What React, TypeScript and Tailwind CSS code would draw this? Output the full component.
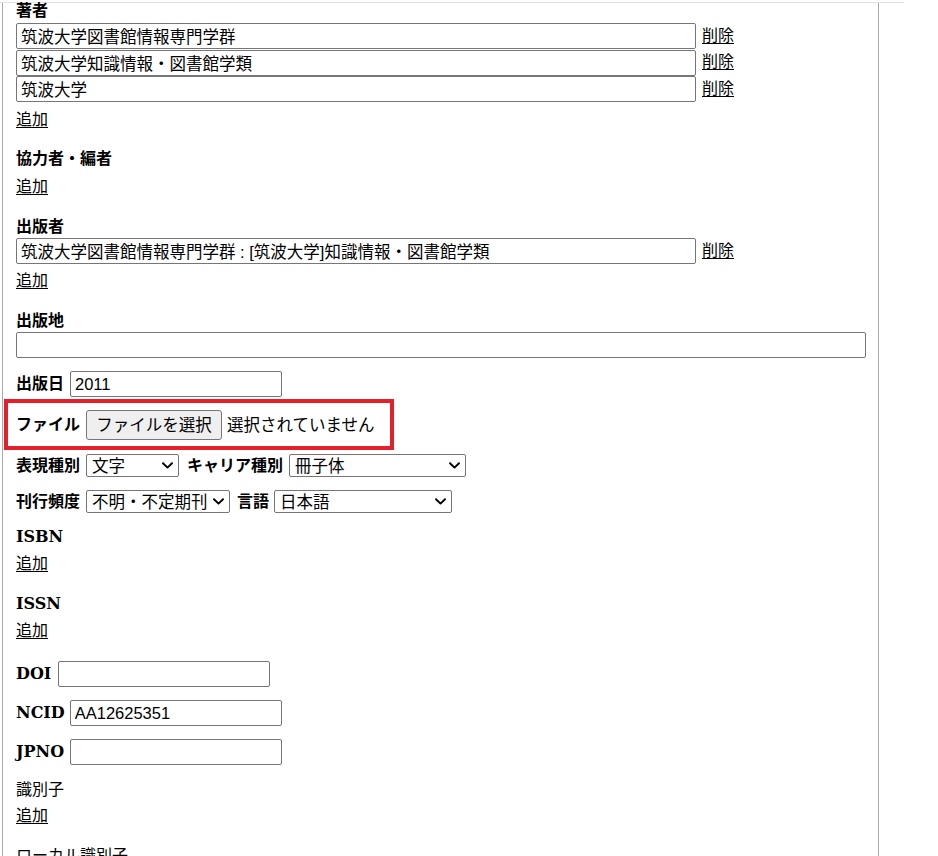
import React from "react";

const LABEL = "font-['DejaVu_Serif','Noto_Sans_CJK_JP',serif] text-[16px] text-black";
const LINK = "font-['Liberation_Sans','Noto_Sans_CJK_JP',sans-serif] text-[16px] text-black";
const SANS = "font-['Liberation_Sans','Noto_Sans_CJK_JP',sans-serif] text-[16.5px] text-black";

function Label({ children, bold = true, inline = false, className = "" }: { children: React.ReactNode; bold?: boolean; inline?: boolean; className?: string }) {
  return (
    <div className={`${LABEL} ${bold ? "font-bold" : "font-normal"} ${inline ? "self-center" : "self-start"} shrink-0 h-[20px] leading-[20px] whitespace-nowrap ${className}`}>
      {children}
    </div>
  );
}

function Link({ children, inline = false, className = "" }: { children: React.ReactNode; inline?: boolean; className?: string }) {
  return (
    <a href="#" onClick={(e) => e.preventDefault()} className={`${LINK} ${inline ? "self-center" : "self-start"} shrink-0 underline underline-offset-[2px] h-[20px] leading-[20px] whitespace-nowrap ${className}`}>
      {children}
    </a>
  );
}

function TextInput({ value = "", width }: { value?: string; width: string }) {
  return (
    <input
      readOnly
      value={value}
      className={`${SANS} ${width} shrink-0 h-[26px] border border-[#767676] rounded-[2px] bg-white pl-[4px] pr-[2px] outline-none`}
    />
  );
}

function Chevron() {
  return (
    <svg width="11" height="7" viewBox="0 0 11 7" fill="none">
      <path d="M1 1.2 L5.5 5.6 L10 1.2" stroke="#000" strokeWidth="1.9" strokeLinecap="round" strokeLinejoin="round" />
    </svg>
  );
}

function Select({ value, width }: { value: string; width: string }) {
  return (
    <div className={`${SANS} ${width} h-[23px] border border-[#767676] rounded-[2px] bg-white flex items-center justify-between pl-[5px] pr-[5px] whitespace-nowrap`}>
      <span className="leading-[20px]">{value}</span>
      <Chevron />
    </div>
  );
}

function InputRow({ value, h }: { value: string; h: string }) {
  return (
    <div className={`flex items-start gap-[6px] shrink-0 ${h}`}>
      <TextInput value={value} width="w-[680px]" />
      <div className="h-[26px] flex items-center">
        <Link inline className="mt-[-1px]">削除</Link>
      </div>
    </div>
  );
}

export default function App() {
  return (
    <div className="w-[938px] h-[856px] overflow-hidden bg-white">
      <div className="h-[2px]" />
      <div className="w-[904px] h-[1px] bg-[#e2e2e2]" />
      <div className="ml-[2px] w-[877px] min-h-[853px] border-l border-r border-[#a9a9a9] pl-[13px] flex flex-col">
        <Label className="mt-[-2px]">著者</Label>
        <div className="mt-[2px] flex flex-col shrink-0">
          <InputRow value="筑波大学図書館情報専門学群" h="h-[26.5px]" />
          <InputRow value="筑波大学知識情報・図書館学類" h="h-[26.5px]" />
          <InputRow value="筑波大学" h="h-[26.5px]" />
        </div>
        <Link className="mt-[7.5px]">追加</Link>

        <Label className="mt-[19px]">協力者・編者</Label>
        <Link className="mt-[8px]">追加</Link>

        <Label className="mt-[20px]">出版者</Label>
        <div className="mt-[1px] shrink-0">
          <InputRow value="筑波大学図書館情報専門学群 : [筑波大学]知識情報・図書館学類" h="h-[26px]" />
        </div>
        <Link className="mt-[7px]">追加</Link>

        <Label className="mt-[20px]">出版地</Label>
        <div className="mt-[1px] h-[26px] shrink-0">
          <TextInput width="w-[850px]" />
        </div>

        <div className="mt-[13px] h-[26px] shrink-0 flex items-center gap-[6px]">
          <Label inline>出版日</Label>
          <TextInput value="2011" width="w-[212px]" />
        </div>

        <div className="mt-[2px] ml-[-12px] shrink-0 w-[390px] h-[51px] border-[4px] border-[#e4212b] pl-[8px] flex items-center">
          <Label inline>ファイル</Label>
          <button className={`${SANS} ml-[6px] w-[136px] h-[30px] border border-[#767676] rounded-[3px] bg-[#efefef] leading-[20px]`}>
            ファイルを選択
          </button>
          <span className={`${SANS} ml-[5px] text-[#222] leading-[20px]`}>選択されていません</span>
        </div>

        <div className="mt-[4px] h-[23px] shrink-0 flex items-center">
          <Label inline>表現種別</Label>
          <div className="ml-[6px]"><Select value="文字" width="w-[93px]" /></div>
          <Label inline className="ml-[8px]">キャリア種別</Label>
          <div className="ml-[6px]"><Select value="冊子体" width="w-[177px]" /></div>
        </div>

        <div className="mt-[13px] h-[23px] shrink-0 flex items-center">
          <Label inline>刊行頻度</Label>
          <div className="ml-[6px]"><Select value="不明・不定期刊" width="w-[144px]" /></div>
          <Label inline className="ml-[7px]">言語</Label>
          <div className="ml-[5px]"><Select value="日本語" width="w-[178px]" /></div>
        </div>

        <Label className="mt-[14px]">ISBN</Label>
        <Link className="mt-[7px]">追加</Link>

        <Label className="mt-[20px]">ISSN</Label>
        <Link className="mt-[7px]">追加</Link>

        <div className="mt-[20px] h-[26px] shrink-0 flex items-center gap-[7px]">
          <Label inline>DOI</Label>
          <TextInput width="w-[212px]" />
        </div>
        <div className="mt-[13px] h-[26px] shrink-0 flex items-center gap-[5px]">
          <Label inline>NCID</Label>
          <TextInput value="AA12625351" width="w-[212px]" />
        </div>
        <div className="mt-[13px] h-[26px] shrink-0 flex items-center gap-[6px]">
          <Label inline>JPNO</Label>
          <TextInput width="w-[212px]" />
        </div>

        <Label bold={false} className="mt-[15px]">識別子</Label>
        <Link className="mt-[6px]">追加</Link>

        <Label bold={false} className="mt-[20px]">ローカル識別子</Label>
      </div>
    </div>
  );
}
